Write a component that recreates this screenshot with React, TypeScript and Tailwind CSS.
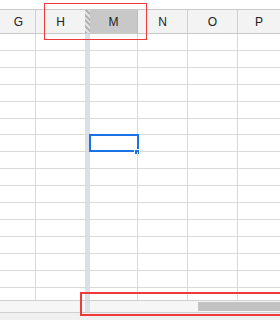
import React from 'react';

const rowHeights = [17, 17, 17, 17, 17, 16, 17, 17, 17, 17, 17, 17, 17, 17, 17, 17];
const selectedRow = 6;

const Row: React.FC<{ h: number; selected: boolean }> = ({ h, selected }) => (
    <div className="flex border-b border-[#dadada]" style={{ height: h }}>
        <div className="w-[36px] shrink-0 border-r border-[#d9d9d9]" />
        <div className="w-[49px] shrink-0" />
        <div className="w-[5px] shrink-0 bg-[#dbe0e8]" />
        <div className="relative w-[48px] shrink-0 border-r border-[#d9d9d9]">
            {selected && (
                <>
                    <div className="absolute -left-[1px] -top-[1px] h-[18px] w-[50px] border-2 border-[#1a73e8]" />
                    <div className="absolute -right-[3px] -bottom-[4px] h-[6px] w-[6px] bg-[#1a73e8] border border-white" />
                </>
            )}
        </div>
        <div className="w-[50px] shrink-0 border-r border-[#d9d9d9]" />
        <div className="w-[50px] shrink-0 border-r border-[#d9d9d9]" />
        <div className="flex-1" />
    </div>
);

const App: React.FC = () => {
    return (
        <div className="relative w-[280px] h-[320px] overflow-hidden bg-white font-['Liberation_Sans',Arial,sans-serif] text-[12px] text-[#222]">
            <div className="h-[9px]" />
            {/* column header */}
            <div className="flex h-[25px] border-y border-[#c8c8c8] bg-[#f3f3f3]">
                <div className="w-[36px] shrink-0 flex items-center justify-center pl-[2px] border-r border-[#d0d0d0]">G</div>
                <div className="w-[49px] shrink-0 flex items-center justify-center">H</div>
                <div className="w-[5px] shrink-0 bg-[repeating-linear-gradient(45deg,#b5b5b5_0_2px,#e2e2e2_2px_4px)]" />
                <div className="w-[48px] shrink-0 flex items-center justify-center bg-[#c8c8c8] border-r border-[#bdbdbd]">M</div>
                <div className="w-[50px] shrink-0 flex items-center justify-center border-r border-[#d0d0d0]">N</div>
                <div className="w-[50px] shrink-0 flex items-center justify-center border-r border-[#d0d0d0]">O</div>
                <div className="flex-1 flex items-center justify-center">P</div>
            </div>
            {/* cells */}
            <div className="h-[266px] overflow-hidden">
                {rowHeights.map((h, i) => (
                    <Row key={i} h={h} selected={i === selectedRow} />
                ))}
            </div>
            {/* horizontal scrollbar */}
            <div className="flex h-[13px] border-y border-[#d0d0d0] bg-[#f6f6f6]">
                <div className="w-[85px] shrink-0" />
                <div className="w-[5px] shrink-0 bg-[#dde1e8]" />
                <div className="flex-1 flex items-center pl-[108px]">
                    <div className="h-[9px] flex-1 bg-[#c2c2c2]" />
                </div>
            </div>
            <div className="h-[8px] bg-[#f0f0f0]" />

            {/* annotation boxes */}
            <div className="absolute left-[44px] top-[3px] h-[37px] w-[103px] border border-[#f03a3a]" />
            <div className="absolute left-[80px] top-[292px] h-[24px] w-[210px] border-2 border-[#f03a3a]" />
        </div>
    );
};

export default App;
